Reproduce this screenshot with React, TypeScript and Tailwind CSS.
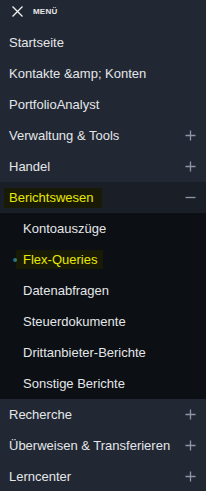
import React from "react";

const Plus = () => (
  <svg width="11" height="11" viewBox="0 0 11 11" className="shrink-0">
    <path d="M5.5 0.5v10M0.5 5.5h10" stroke="#8d95a8" strokeWidth="1.3" />
  </svg>
);
const Minus = () => (
  <svg width="11" height="11" viewBox="0 0 11 11" className="shrink-0">
    <path d="M0.5 5.5h10" stroke="#8d95a8" strokeWidth="1.3" />
  </svg>
);

const Row = ({ label, plus }: { label: string; plus?: boolean }) => (
  <div className="flex h-[31px] items-center justify-between pl-[9px] pr-[10px]">
    <span className="text-[13px] text-[#e4e6ea]">{label}</span>
    {plus && <Plus />}
  </div>
);

const Sub = ({ label, active }: { label: string; active?: boolean }) => (
  <div className="relative flex h-[31px] items-center pl-[16px]">
    {active && (
      <span className="absolute left-[13px] top-[14px] h-[4px] w-[4px] rounded-full bg-[linear-gradient(90deg,#2460b0_50%,#2f8a3c_50%)]" />
    )}
    <span
      className={
        active
          ? "flex h-[19px] items-center bg-[#191a05] pl-[7px] pr-[6px] text-[13px] text-[#e8e800]"
          : "pl-[7px] text-[13px] text-[#e4e6ea]"
      }
    >
      {label}
    </span>
  </div>
);

export default function App() {
  return (
    <div
      className="h-[491px] w-[206px] overflow-hidden bg-[#222833]"
      style={{ fontFamily: '"Liberation Sans", Arial, sans-serif' }}
    >
      <div className="flex h-[27px] items-start gap-[10px] pl-[12px] pt-[6px]">
        <svg width="11" height="11" viewBox="0 0 11 11">
          <path d="M0.5 0.5l10 10M10.5 0.5l-10 10" stroke="#f2f2f2" strokeWidth="1.3" />
        </svg>
        <span className="mt-[1px] text-[8px] font-bold leading-[9px] tracking-[0.2px] text-[#e8e8e8]">MENÜ</span>
      </div>
      <Row label="Startseite" />
      <Row label={"Kontakte &amp; Konten"} />
      <Row label="PortfolioAnalyst" />
      <Row label="Verwaltung & Tools" plus />
      <Row label="Handel" plus />
      <div className="flex h-[31px] items-center justify-between bg-[#1a1e26] pl-[4px] pr-[10px]">
        <span className="flex h-[20px] items-center bg-[#191a05] pl-[5px] pr-[8px] text-[13px] text-[#e8e800]">
          Berichtswesen
        </span>
        <Minus />
      </div>
      <div className="bg-[#0c0f13]">
        <Sub label="Kontoauszüge" />
        <Sub label="Flex-Queries" active />
        <Sub label="Datenabfragen" />
        <Sub label="Steuerdokumente" />
        <Sub label="Drittanbieter-Berichte" />
        <Sub label="Sonstige Berichte" />
      </div>
      <Row label="Recherche" plus />
      <Row label="Überweisen & Transferieren" plus />
      <Row label="Lerncenter" plus />
    </div>
  );
}
